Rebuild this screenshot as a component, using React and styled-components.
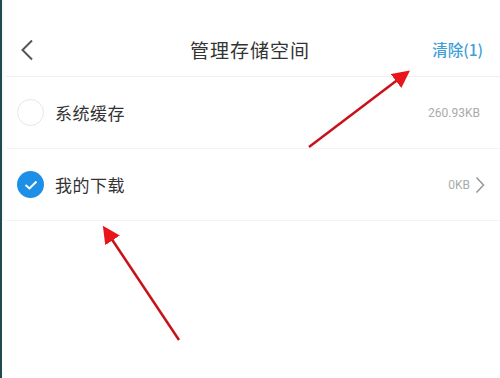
import React from "react";
import styled, { createGlobalStyle } from "styled-components";

const GlobalStyle = createGlobalStyle`
	html, body {
		margin: 0;
		padding: 0;
		background: #ffffff;
	}
	body {
		font-family: "Noto Sans CJK SC", "Noto Sans", sans-serif;
	}
`;

const items = [
	{ name: "系统缓存", size: "260.93KB", checked: false, arrow: false },
	{ name: "我的下载", size: "0KB", checked: true, arrow: true },
];

const App = () => {
	return (
		<>
			<GlobalStyle />
			<Screen>
				<Page>
					<Header>
						<BackButton>
							<svg width="14" height="22" viewBox="0 0 14 22">
								<path d="M12 1.5 L2.5 11 L12 20.5" fill="none" stroke="#555" strokeWidth="2" />
							</svg>
						</BackButton>
						<Title>管理存储空间</Title>
						<ClearButton>清除(1)</ClearButton>
					</Header>
					{items.map((item) => (
						<Row key={item.name}>
							<Check checked={item.checked}>
								{item.checked && (
									<svg width="14" height="10" viewBox="0 0 14 10">
										<path d="M1.5 5 L5.5 8.5 L12.5 1.5" fill="none" stroke="#fff" strokeWidth="2" />
									</svg>
								)}
							</Check>
							<Name>{item.name}</Name>
							<Size>{item.size}</Size>
							{item.arrow && (
								<svg width="10" height="18" viewBox="0 0 10 18">
									<path d="M1.5 1.5 L8.5 9 L1.5 16.5" fill="none" stroke="#999" strokeWidth="1.6" />
								</svg>
							)}
						</Row>
					))}
				</Page>
				<Arrows width="500" height="378" viewBox="0 0 500 378">
					<defs>
						<marker id="head" markerWidth="7" markerHeight="7" refX="4" refY="3.5" orient="auto" markerUnits="strokeWidth">
							<path d="M0 0 L7 3.5 L0 7 Z" fill="#e8161b" />
						</marker>
					</defs>
					<line x1="309" y1="147" x2="404" y2="75" stroke="#c8121a" strokeWidth="2.5" markerEnd="url(#head)" />
					<line x1="179" y1="340" x2="107" y2="232" stroke="#c8121a" strokeWidth="2.5" markerEnd="url(#head)" />
				</Arrows>
			</Screen>
		</>
	);
};

const Screen = styled.div`
	position: relative;
	width: 500px;
	height: 378px;
	overflow: hidden;
	background: #fff;
	border-left: 2px solid #1f4a50;
	box-sizing: border-box;
`;

const Page = styled.div`
	display: flex;
	flex-direction: column;
	padding-left: 4px;
	background: linear-gradient(to right, #f7f9f7 0, #f7f9f7 2px, #fff 2px);
`;

const Header = styled.div`
	height: 77px;
	display: flex;
	align-items: center;
	position: relative;
	padding: 22px 16px 0 14px;
	border-bottom: 1px solid #f0f0f0;
	box-sizing: border-box;
`;

const BackButton = styled.div`
	display: flex;
	align-items: center;
	margin-top: 2px;
`;

const Title = styled.div`
	position: absolute;
	left: 0;
	right: 0;
	top: 22px;
	bottom: 0;
	display: flex;
	align-items: center;
	justify-content: center;
	font-size: 19px;
	color: #333;
	letter-spacing: 1px;
	pointer-events: none;
	margin-left: -6px;
`;

const ClearButton = styled.div`
	margin-left: auto;
	margin-right: 1px;
	font-size: 15.5px;
	font-weight: 500;
	color: #3f9fd8;
`;

const Row = styled.div`
	height: 72px;
	display: flex;
	align-items: center;
	padding: 0 15px 0 11px;
	border-bottom: 1px solid #f3f3f3;
	box-sizing: border-box;
`;

const Check = styled.div`
	width: 27px;
	height: 27px;
	border-radius: 50%;
	box-sizing: border-box;
	display: flex;
	align-items: center;
	justify-content: center;
	background: ${(p) => (p.checked ? "#1e8fe6" : "#fff")};
	border: ${(p) => (p.checked ? "none" : "1.5px solid #e6e6e6")};
`;

const Name = styled.div`
	margin-left: 11px;
	font-size: 17px;
	color: #333;
	letter-spacing: 0.5px;
`;

const Size = styled.div`
	margin-left: auto;
	margin-right: 5px;
	font-family: "Roboto", "Liberation Sans", sans-serif;
	font-size: 12px;
	color: #aaa;
`;

const Arrows = styled.svg`
	position: absolute;
	left: -2px;
	top: 0;
	pointer-events: none;
`;

export default App;
